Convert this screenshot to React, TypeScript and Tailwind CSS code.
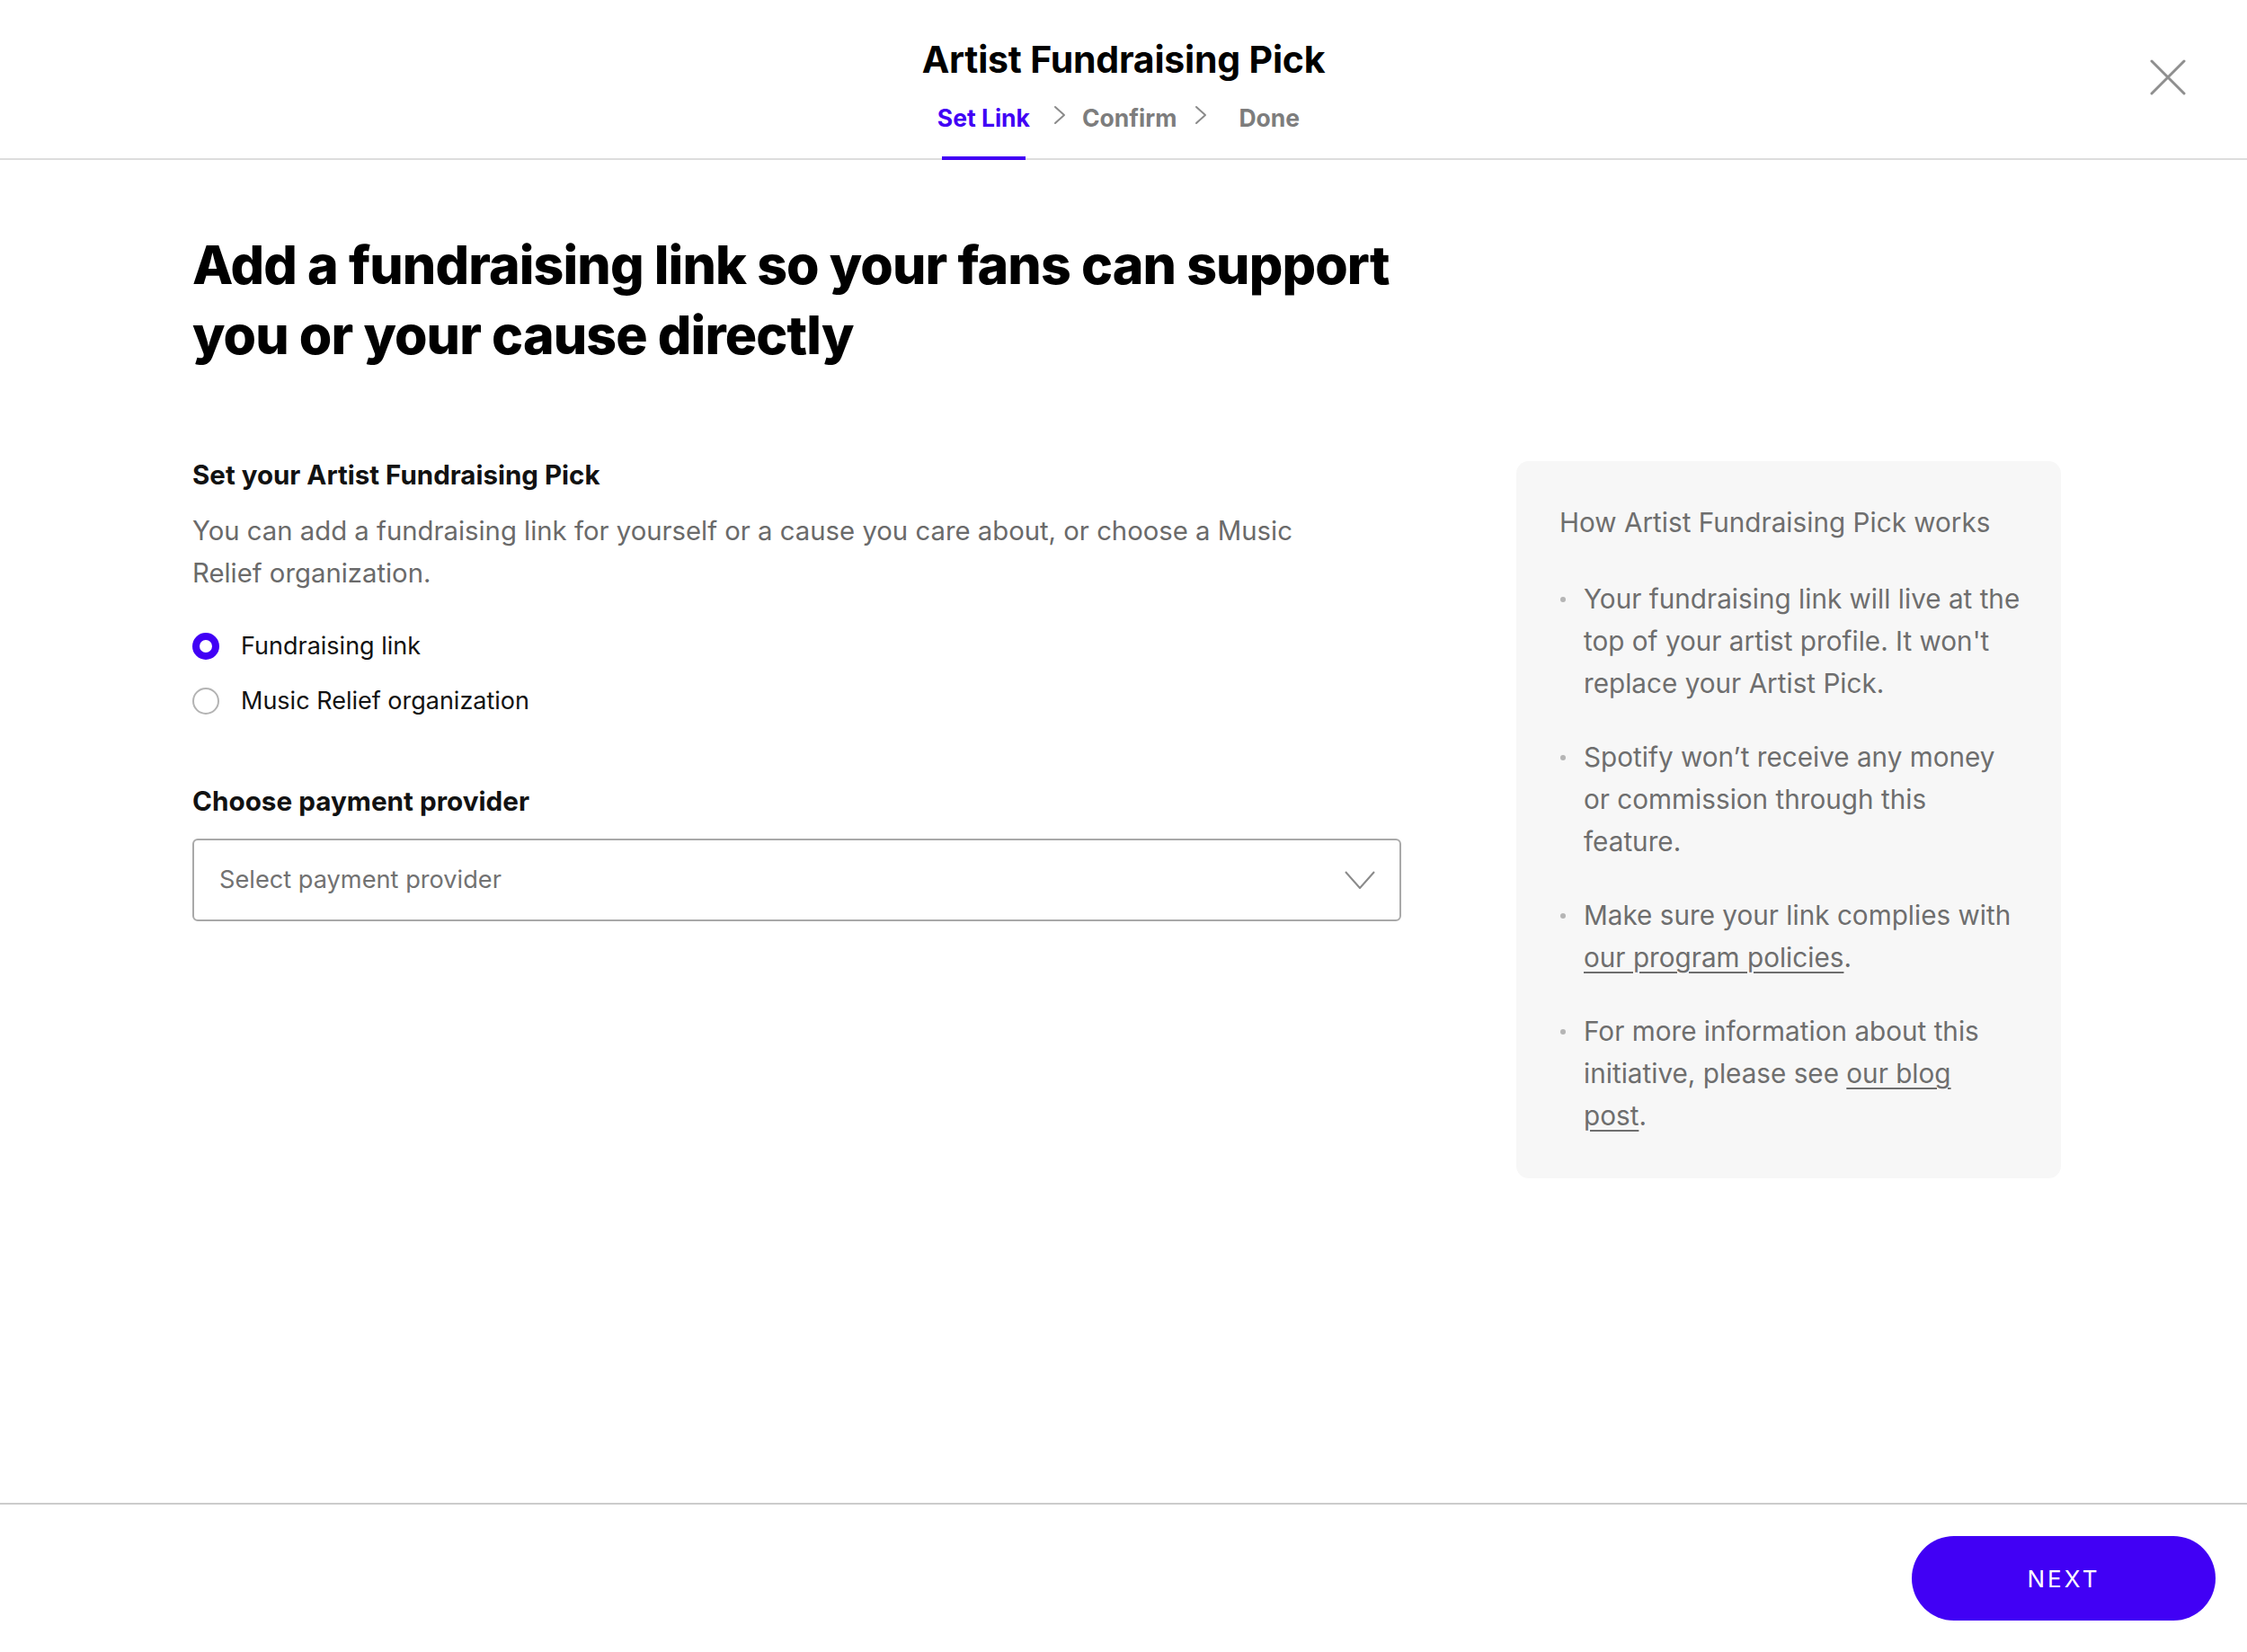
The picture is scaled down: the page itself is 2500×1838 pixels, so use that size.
import React, { useState } from 'react';

const PURPLE = '#4100f5';

const Chevron: React.FC<{ className?: string }> = ({ className }) => (
  <svg viewBox="0 0 14 22" className={className} fill="none">
    <polyline points="2,2 12,11 2,20" stroke="#8a8a8a" strokeWidth="2" strokeLinecap="round" strokeLinejoin="round" />
  </svg>
);

const Radio: React.FC<{ checked: boolean; label: string; onClick: () => void }> = ({ checked, label, onClick }) => (
  <button type="button" onClick={onClick} className="flex items-center h-[40px] text-left">
    {checked ? (
      <span className="w-[30px] h-[30px] rounded-full border-[8px] border-[#4100f5] bg-white shrink-0" />
    ) : (
      <span className="w-[30px] h-[30px] rounded-full border-2 border-[#b3b3b3] bg-white shrink-0" />
    )}
    <span className="ml-[24px] text-[27px] leading-[40px] text-[#121212]">{label}</span>
  </button>
);

const linkCls = 'underline underline-offset-[5px] decoration-[2px]';

const bullets: React.ReactNode[] = [
  <>Your fundraising link will live at the top of your artist profile. It won't replace your Artist Pick.</>,
  <>Spotify won’t receive any money or commission through this feature.</>,
  <>
    Make sure your link complies with <a href="#" className={linkCls}>our program policies</a>.
  </>,
  <>
    For more information about this initiative, please see <a href="#" className={linkCls}>our blog</a>
    <br />
    <a href="#" className={linkCls}>post</a>.
  </>,
];

export default function App() {
  const [choice, setChoice] = useState<'link' | 'org'>('link');

  return (
    <div className="min-h-screen flex flex-col bg-white font-['Inter','Noto_Sans',sans-serif]">
      {/* header with stepper */}
      <header className="relative border-b-2 border-[#dddddd] flex flex-col items-center">
        <h1 className="mt-[41px] text-[41px] leading-[50px] font-bold text-black tracking-[-0.005em]">
          Artist Fundraising Pick
        </h1>
        <nav className="mt-[23px] pr-[11px] flex items-start">
          <div className="relative pb-[28px]">
            <span className="block text-[26.5px] leading-[34px] font-bold" style={{ color: PURPLE }}>Set Link</span>
            <span className="absolute left-[5px] right-[5px] bottom-[-2px] h-[4px]" style={{ backgroundColor: PURPLE }} />
          </div>
          <Chevron className="w-[14px] h-[22px] mt-[3px] ml-[26px] mr-[18px]" />
          <span className="text-[26.5px] leading-[34px] font-bold text-[#7d7d7d]">Confirm</span>
          <Chevron className="w-[14px] h-[22px] mt-[3px] ml-[20px] mr-[35px]" />
          <span className="text-[26.5px] leading-[34px] font-bold text-[#7d7d7d]">Done</span>
        </nav>
        <button type="button" className="absolute right-[66px] top-[64px] w-[44px] h-[44px] flex items-center justify-center" aria-label="Close">
          <svg viewBox="0 0 40 40" className="w-[40px] h-[40px]" fill="none">
            <path d="M2 2 L38 38 M38 2 L2 38" stroke="#8f8f8f" strokeWidth="3" strokeLinecap="round" />
          </svg>
        </button>
      </header>

      <main className="flex-1 pl-[214px]">
        <h2 className="mt-[78px] max-w-[1400px] text-[59px] leading-[78px] font-extrabold text-black tracking-[-0.015em]">
          Add a fundraising link so your fans can support you or your cause directly
        </h2>

        <div className="mt-[101px] flex items-start gap-[128px]">
          <section className="w-[1345px]">
            <h3 className="mt-[-3px] text-[29.5px] leading-[36px] font-bold text-[#121212]">Set your Artist Fundraising Pick</h3>
            <p className="mt-[21px] max-w-[1260px] text-[29.3px] leading-[47px] text-[#6a6a6a]">
              You can add a fundraising link for yourself or a cause you care about, or choose a Music Relief organization.
            </p>
            <div className="mt-[38px] flex flex-col gap-[21px]">
              <Radio checked={choice === 'link'} label="Fundraising link" onClick={() => setChoice('link')} />
              <Radio checked={choice === 'org'} label="Music Relief organization" onClick={() => setChoice('org')} />
            </div>

            <h3 className="mt-[73px] text-[29.7px] leading-[36px] font-bold text-[#121212]">Choose payment provider</h3>
            <button
              type="button"
              className="mt-[24px] w-full h-[92px] border-2 border-[#a9a9a9] rounded-[6px] flex items-center justify-between pl-[28px] pr-[26px]"
            >
              <span className="text-[27.2px] text-[#727272]">Select payment provider</span>
              <svg viewBox="0 0 36 24" className="w-[36px] h-[24px]" fill="none">
                <polyline points="2,3 18,21 34,3" stroke="#8a8a8a" strokeWidth="2" strokeLinejoin="round" />
              </svg>
            </button>
          </section>

          <aside className="w-[606px] bg-[#f7f7f7] rounded-[14px] pt-[48px] pb-[46px] pl-[48px] pr-[40px] text-[#6e6e6e]">
            <p className="text-[29.7px] leading-[40px]">How Artist Fundraising Pick works</p>
            <ul className="mt-[42px] flex flex-col gap-[35px]">
              {bullets.map((b, i) => (
                <li key={i} className="flex items-start">
                  <span className="w-[27px] shrink-0 h-[47px] flex items-center">
                    <span className="w-[6px] h-[6px] rounded-full bg-[#b5b5b5] ml-[1px]" />
                  </span>
                  <span className="text-[29.7px] leading-[47px]">{b}</span>
                </li>
              ))}
            </ul>
          </aside>
        </div>
      </main>

      <footer className="border-t-2 border-[#cccccc] flex justify-end pt-[35px] pb-[35px] pr-[35px]">
        <button
          type="button"
          className="w-[338px] h-[94px] rounded-full text-white text-[26px] tracking-[0.12em] font-normal"
          style={{ backgroundColor: PURPLE }}
        >
          NEXT
        </button>
      </footer>
    </div>
  );
}
